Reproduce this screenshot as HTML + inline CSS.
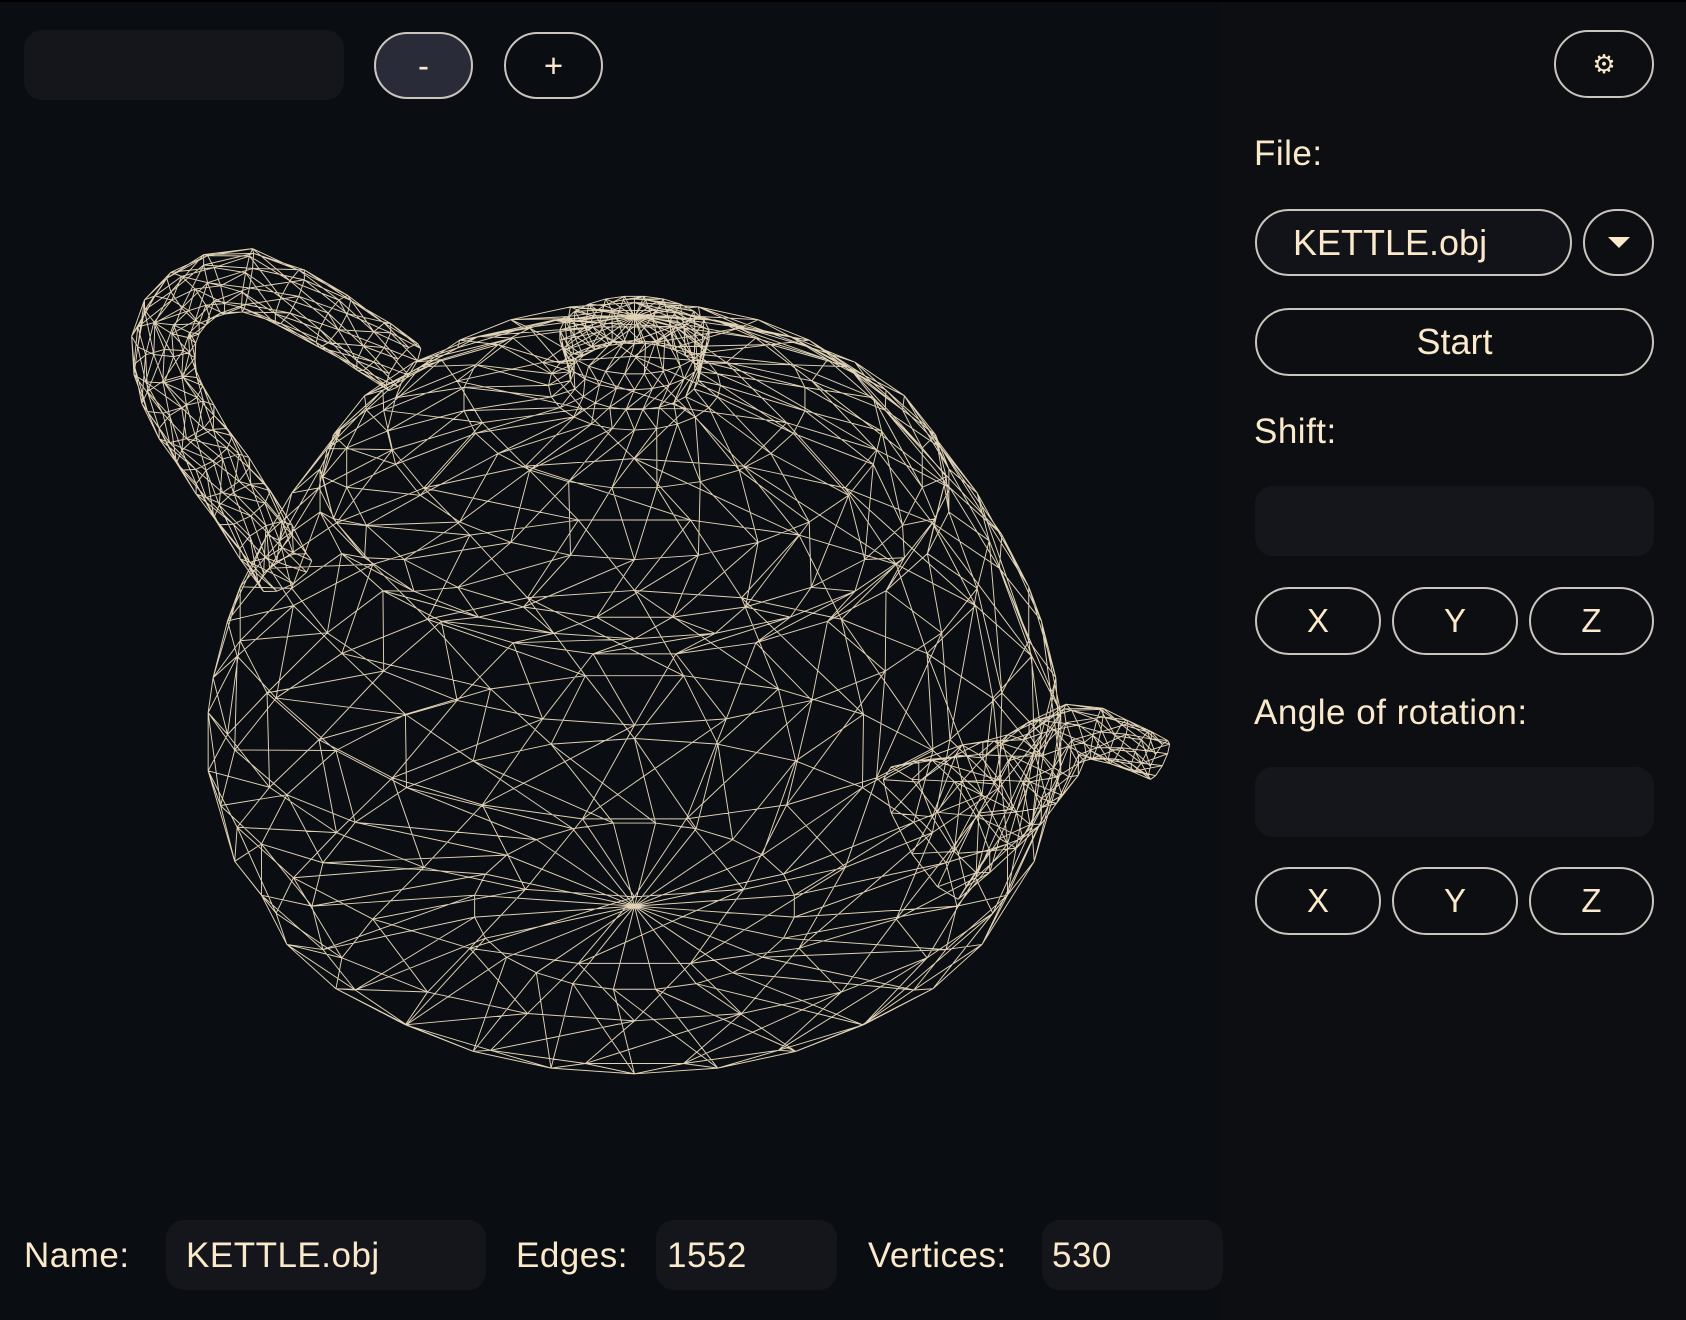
<!DOCTYPE html>
<html><head><meta charset="utf-8"><style>
*{box-sizing:border-box;margin:0;padding:0}
body{width:1686px;height:1320px;background:#0d0e12;font-family:"Liberation Sans",sans-serif;color:#fbe9cc;position:relative;overflow:hidden}
.top{position:absolute;left:0;top:0;width:1686px;height:2px;background:#000}
.canvas{position:absolute;left:0;top:2px;width:1220px;height:1318px;background:#0a0d11}
.fld{position:absolute;background:#15161b;border-radius:18px}
.btn{position:absolute;border:2px solid #cbc6bd;border-radius:40px;display:flex;align-items:center;justify-content:center;font-size:33px;color:#fbe9cc}
.lbl{position:absolute;font-size:35px;line-height:40px;letter-spacing:0.5px}
.txt{position:absolute;font-size:35px;line-height:40px;letter-spacing:0.5px}
svg{position:absolute;left:0;top:0}
</style></head><body>
<div class="canvas"></div>
<div class="top"></div>
<svg id="w" width="1686" height="1320" viewBox="0 0 1568 1228"></svg>
<div class="fld" style="left:24px;top:30px;width:320px;height:70px"></div>
<div class="btn" style="left:374px;top:32px;width:99px;height:67px;background:#292b38">-</div>
<div class="btn" style="left:504px;top:32px;width:99px;height:67px">+</div>
<div class="btn" style="left:1554px;top:30px;width:100px;height:68px;font-size:26px">⚙</div>
<div class="lbl" style="left:1254px;top:134px">File:</div>
<div class="btn" style="left:1255px;top:209px;width:317px;height:67px;background:#121318;justify-content:flex-start;padding-left:36px;font-size:36px">KETTLE.obj</div>
<div class="btn" style="left:1583px;top:209px;width:71px;height:67px"><svg width="22" height="12" style="position:static"><polygon points="0,0 22,0 11,11" fill="#fbe9cc"/></svg></div>
<div class="btn" style="left:1255px;top:308px;width:399px;height:68px;font-size:36px">Start</div>
<div class="lbl" style="left:1254px;top:412px">Shift:</div>
<div class="fld" style="left:1255px;top:486px;width:399px;height:70px"></div>
<div class="btn" style="left:1255px;top:587px;width:126px;height:68px">X</div>
<div class="btn" style="left:1392px;top:587px;width:126px;height:68px">Y</div>
<div class="btn" style="left:1529px;top:587px;width:125px;height:68px">Z</div>
<div class="lbl" style="left:1254px;top:693px">Angle of rotation:</div>
<div class="fld" style="left:1255px;top:767px;width:399px;height:70px"></div>
<div class="btn" style="left:1255px;top:867px;width:126px;height:68px">X</div>
<div class="btn" style="left:1392px;top:867px;width:126px;height:68px">Y</div>
<div class="btn" style="left:1529px;top:867px;width:125px;height:68px">Z</div>
<div class="txt" style="left:24px;top:1236px">Name:</div>
<div class="fld" style="left:166px;top:1220px;width:320px;height:70px"></div>
<div class="txt" style="left:186px;top:1236px">KETTLE.obj</div>
<div class="txt" style="left:516px;top:1236px">Edges:</div>
<div class="fld" style="left:656px;top:1220px;width:181px;height:70px"></div>
<div class="txt" style="left:667px;top:1236px">1552</div>
<div class="txt" style="left:868px;top:1236px">Vertices:</div>
<div class="fld" style="left:1042px;top:1220px;width:181px;height:70px"></div>
<div class="txt" style="left:1052px;top:1236px">530</div>
<script>
var CX=590,CY=843,C=0.85,S=0.52,d="";
function P(x,h,z){return [CX+x,CY-h*C+z*S];}
function L(a,b){d+="M"+a[0].toFixed(1)+" "+a[1].toFixed(1)+"L"+b[0].toFixed(1)+" "+b[1].toFixed(1);}
var prof=[[0,0],[150,0],[300,0],[350,40],[385,110],[400,180],[392,250],[370,320],[330,400],[295,455],[290,470],[270,480],[230,520],[160,555],[80,570],[60,580],[65,605],[70,625],[40,640],[0,645]];
var N=24,rings=[];
prof.forEach(function(p,i){var r=[];for(var k=0;k<N;k++){var a=(k+(i%2)*0.5)/N*2*Math.PI;r.push(P(p[0]*Math.cos(a),p[1],p[0]*Math.sin(a)));}rings.push(r);});
for(var i=0;i<rings.length;i++){for(var k=0;k<N;k++){var A=rings[i][k],B=rings[i][(k+1)%N];L(A,B);if(i+1<rings.length){var n=rings[i+1];L(A,n[k]);L(A,n[(k+N-1)%N]);}}}
function smooth(pts,rad,sub){var o=[],orr=[];for(var i=0;i<pts.length-1;i++){var p0=pts[Math.max(0,i-1)],p1=pts[i],p2=pts[i+1],p3=pts[Math.min(pts.length-1,i+2)];for(var s=0;s<sub;s++){var t=s/sub,t2=t*t,t3=t2*t;var f=function(a,b,c,e){return 0.5*(2*b+(-a+c)*t+(2*a-5*b+4*c-e)*t2+(-a+3*b-3*c+e)*t3);};o.push([f(p0[0],p1[0],p2[0],p3[0]),f(p0[1],p1[1],p2[1],p3[1])]);orr.push(rad[i]+(rad[i+1]-rad[i])*t);}}o.push(pts[pts.length-1]);orr.push(rad[rad.length-1]);return [o,orr];}
function tube(pts,rad){var q=smooth(pts,rad,2);pts=q[0];rad=q[1];var M=10,rs=[];for(var i=0;i<pts.length;i++){var a=pts[Math.max(0,i-1)],b=pts[Math.min(pts.length-1,i+1)];var tx=b[0]-a[0],ty=b[1]-a[1],l=Math.hypot(tx,ty);var nx=-ty/l,ny=tx/l;var r=[],rr=rad[i];for(var k=0;k<M;k++){var t=(k+(i%2)*0.5)/M*2*Math.PI;r.push(P(pts[i][0]+rr*Math.cos(t)*nx,pts[i][1]+rr*Math.cos(t)*ny,rr*Math.sin(t)));}rs.push(r);}
for(var i=0;i<rs.length;i++)for(var k=0;k<M;k++){L(rs[i][k],rs[i][(k+1)%M]);if(i+1<rs.length){L(rs[i][k],rs[i+1][k]);L(rs[i][k],rs[i+1][(k+M-1)%M]);}}}
tube([[-215,590],[-280,640],[-360,685],[-415,665],[-438,620],[-430,560],[-400,500],[-365,440],[-325,365]],[26,28,30,30,30,30,30,30,28]);
tube([[270,80],[330,120],[370,150],[410,190],[450,180],[488,160]],[70,55,40,28,22,20]);
document.getElementById('w').innerHTML='<path d="'+d+'" stroke="#f3e3c4" stroke-width="0.9" fill="none" stroke-opacity="0.92"/>';
</script>
</body></html>
